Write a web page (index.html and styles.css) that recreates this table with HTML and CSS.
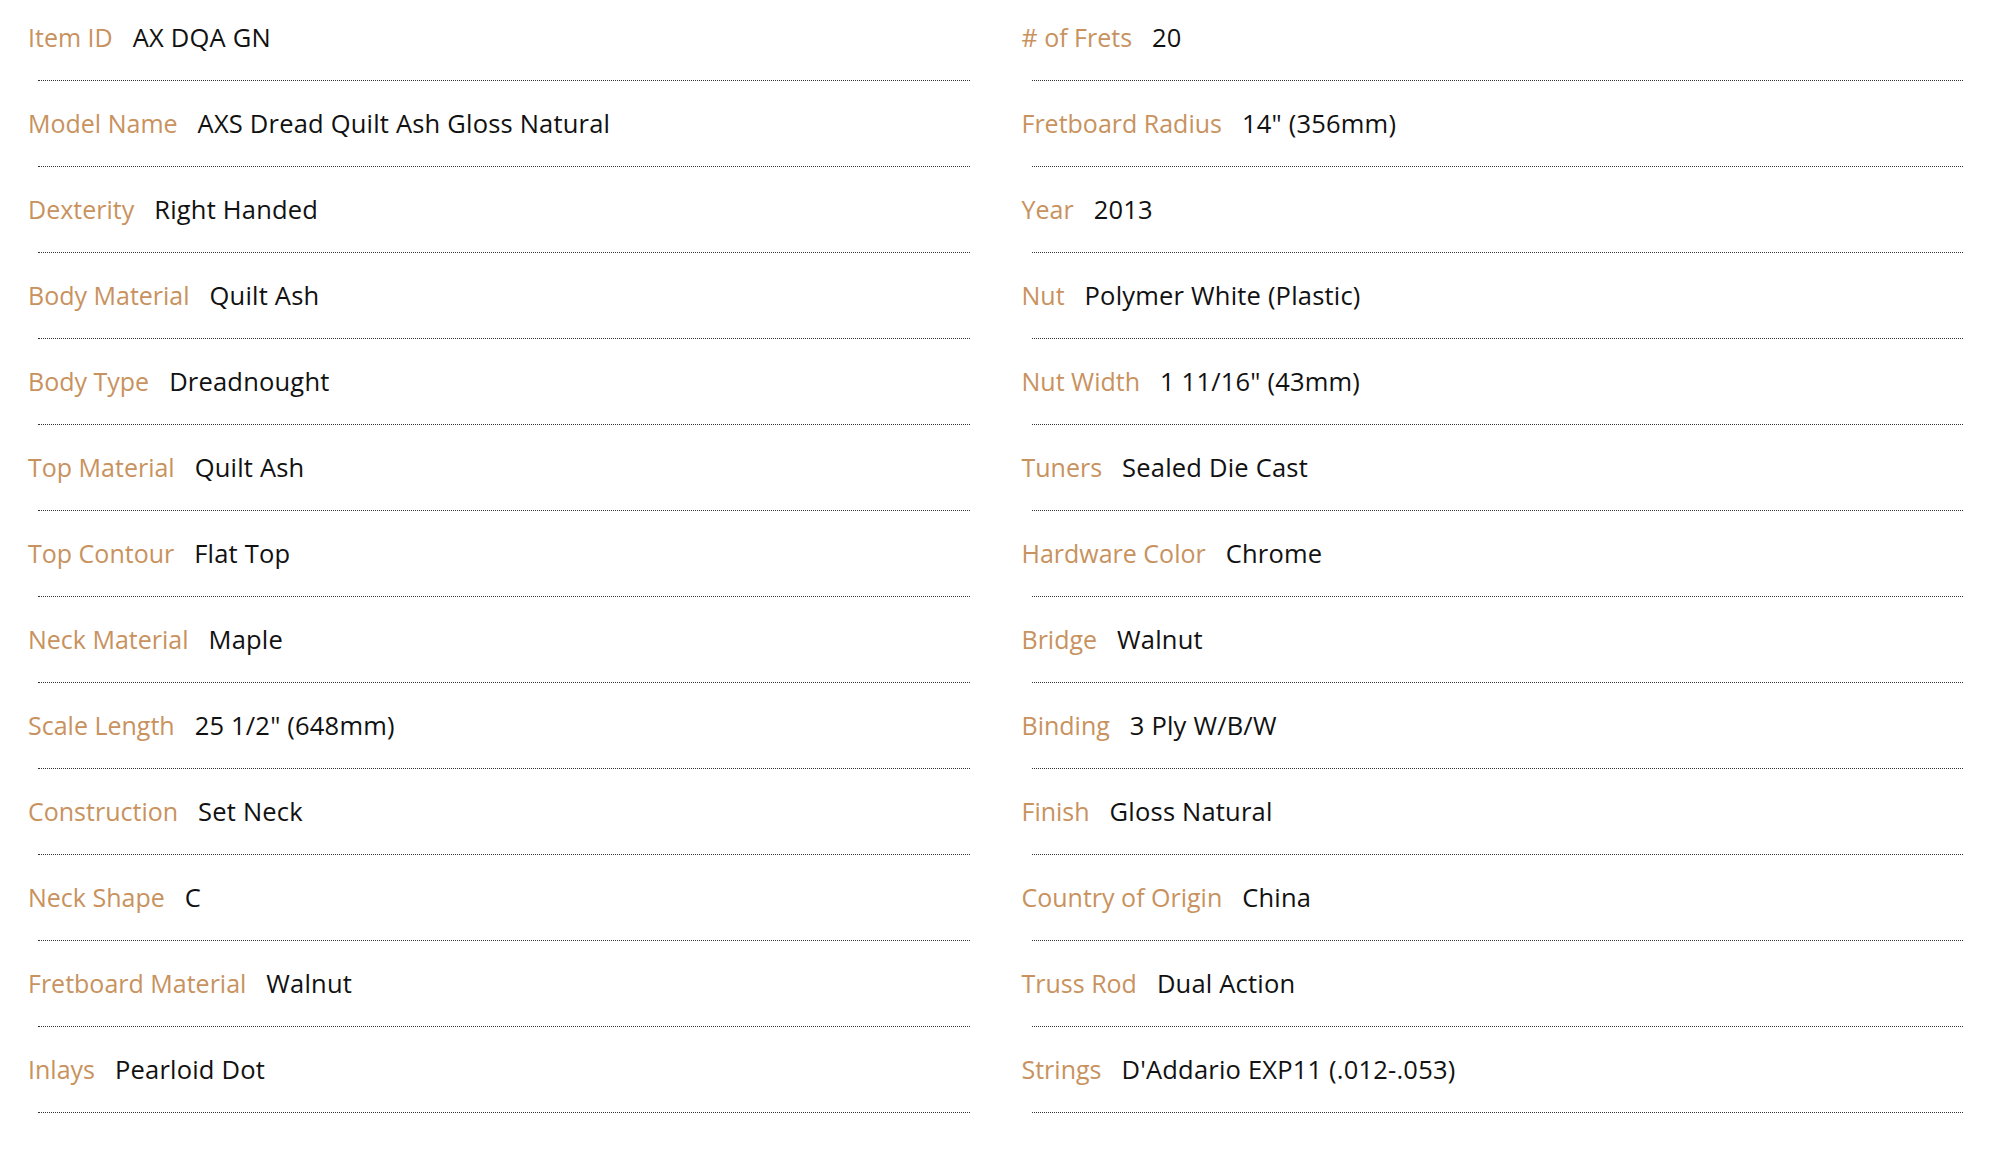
FILE: index.html
```html
<!DOCTYPE html>
<html lang="en">
<head>
<meta charset="utf-8">
<title>Specifications</title>
<link rel="stylesheet" href="styles.css">
</head>
<body>
<div class="specs">
  <div class="col">
    <div class="row"><div class="pair"><span class="label">Item ID</span><span class="value">AX DQA GN</span></div><div class="rule"></div></div>
    <div class="row"><div class="pair"><span class="label">Model Name</span><span class="value">AXS Dread Quilt Ash Gloss Natural</span></div><div class="rule"></div></div>
    <div class="row"><div class="pair"><span class="label">Dexterity</span><span class="value">Right Handed</span></div><div class="rule"></div></div>
    <div class="row"><div class="pair"><span class="label">Body Material</span><span class="value">Quilt Ash</span></div><div class="rule"></div></div>
    <div class="row"><div class="pair"><span class="label">Body Type</span><span class="value">Dreadnought</span></div><div class="rule"></div></div>
    <div class="row"><div class="pair"><span class="label">Top Material</span><span class="value">Quilt Ash</span></div><div class="rule"></div></div>
    <div class="row"><div class="pair"><span class="label">Top Contour</span><span class="value">Flat Top</span></div><div class="rule"></div></div>
    <div class="row"><div class="pair"><span class="label">Neck Material</span><span class="value">Maple</span></div><div class="rule"></div></div>
    <div class="row"><div class="pair"><span class="label">Scale Length</span><span class="value">25 1/2" (648mm)</span></div><div class="rule"></div></div>
    <div class="row"><div class="pair"><span class="label">Construction</span><span class="value">Set Neck</span></div><div class="rule"></div></div>
    <div class="row"><div class="pair"><span class="label">Neck Shape</span><span class="value">C</span></div><div class="rule"></div></div>
    <div class="row"><div class="pair"><span class="label">Fretboard Material</span><span class="value">Walnut</span></div><div class="rule"></div></div>
    <div class="row"><div class="pair"><span class="label">Inlays</span><span class="value">Pearloid Dot</span></div><div class="rule"></div></div>
  </div>
  <div class="col">
    <div class="row"><div class="pair"><span class="label"># of Frets</span><span class="value">20</span></div><div class="rule"></div></div>
    <div class="row"><div class="pair"><span class="label">Fretboard Radius</span><span class="value">14" (356mm)</span></div><div class="rule"></div></div>
    <div class="row"><div class="pair"><span class="label">Year</span><span class="value">2013</span></div><div class="rule"></div></div>
    <div class="row"><div class="pair"><span class="label">Nut</span><span class="value">Polymer White (Plastic)</span></div><div class="rule"></div></div>
    <div class="row"><div class="pair"><span class="label">Nut Width</span><span class="value">1 11/16" (43mm)</span></div><div class="rule"></div></div>
    <div class="row"><div class="pair"><span class="label">Tuners</span><span class="value">Sealed Die Cast</span></div><div class="rule"></div></div>
    <div class="row"><div class="pair"><span class="label">Hardware Color</span><span class="value">Chrome</span></div><div class="rule"></div></div>
    <div class="row"><div class="pair"><span class="label">Bridge</span><span class="value">Walnut</span></div><div class="rule"></div></div>
    <div class="row"><div class="pair"><span class="label">Binding</span><span class="value">3 Ply W/B/W</span></div><div class="rule"></div></div>
    <div class="row"><div class="pair"><span class="label">Finish</span><span class="value">Gloss Natural</span></div><div class="rule"></div></div>
    <div class="row"><div class="pair"><span class="label">Country of Origin</span><span class="value">China</span></div><div class="rule"></div></div>
    <div class="row"><div class="pair"><span class="label">Truss Rod</span><span class="value">Dual Action</span></div><div class="rule"></div></div>
    <div class="row"><div class="pair"><span class="label">Strings</span><span class="value">D'Addario EXP11 (.012-.053)</span></div><div class="rule"></div></div>
  </div>
</div>
</body>
</html>
```

FILE: styles.css
```css
html, body {
  margin: 0;
  padding: 0;
  background: #ffffff;
}

body {
  font-family: "Open Sans", "Noto Sans", sans-serif;
  font-size: 25.5px;
  color: #111111;
}

.specs {
  display: grid;
  grid-template-columns: 1fr 1fr;
  column-gap: 52px;
  padding: 0 30px 0 28px;
}

.col {
  display: flex;
  flex-direction: column;
}

.row {
  display: flex;
  flex-direction: column;
  height: 86px;
  padding-top: 18px;
  box-sizing: border-box;
}

.pair {
  display: flex;
  align-items: baseline;
  gap: 20px;
  line-height: 38px;
  white-space: nowrap;
}

.label {
  color: #c8925e;
  font-size: 25px;
}

.value {
  color: #111111;
  letter-spacing: 0.2px;
}

.rule {
  margin-top: 24px;
  margin-left: 10px;
  border-top: 1px dotted #333333;
}
```
